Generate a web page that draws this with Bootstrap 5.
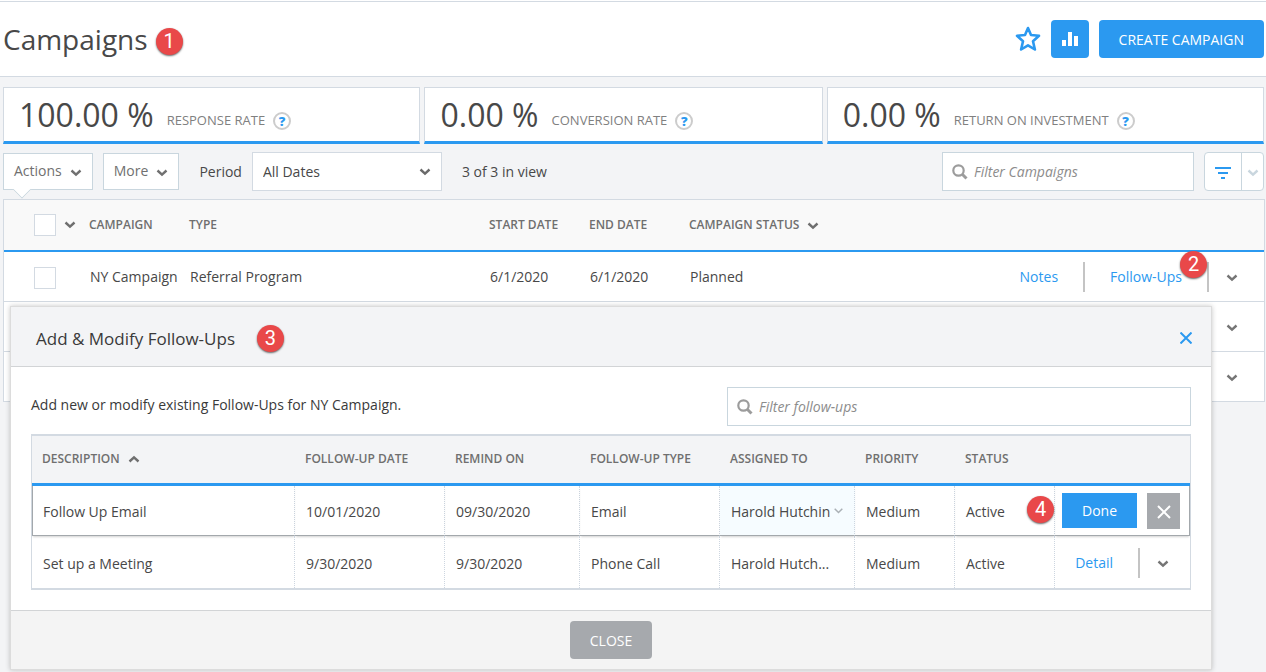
<!DOCTYPE html>
<html lang="en">
<head>
<meta charset="utf-8">
<meta name="viewport" content="width=device-width, initial-scale=1">
<title>Campaigns</title>
<link href="https://cdn.jsdelivr.net/npm/bootstrap@5.3.0/dist/css/bootstrap.min.css" rel="stylesheet">
<style>
:root { --blue: #2b99f0; --line: #d3dae2; --ink: #484848; --muted: #757575; }
body { font-family: "Open Sans", sans-serif; font-size: 14px; line-height: 20px; color: var(--ink); background: #f3f4f6; min-height: 100vh; }
a { color: var(--blue); text-decoration: none; }
.page-head { margin-top: 1px; height: 76px; border-top: 1px solid var(--line); border-bottom: 1px solid var(--line); padding: 0 2px 0 3px; }
.page-title { font-size: 28px; line-height: 38px; font-weight: 400; }
.step { display: inline-flex; align-items: center; justify-content: center; width: 27px; height: 27px; border-radius: 50%; background: #e94849; color: #fff; font: 20px/27px Roboto, sans-serif; box-shadow: 0 1px 2px rgba(0,0,0,.6); flex: none; }
.btn-main { background: var(--blue); color: #fff; border: 0; border-radius: 4px; height: 38px; font-size: 14px; line-height: 20px; padding: 2px 20px 0; }
.btn-square { width: 38px; padding: 0; }
.inner { padding: 0 2px 0 3px; }
.stat { background: #fff; border: 1px solid var(--line); border-bottom: 3px solid var(--blue); height: 57px; padding: 0 0 0 15px; }
.stat-number { font-size: 32px; line-height: 54px; padding-top: 1px; }
.stat-label { font-size: 13px; color: #808080; margin: 10px 8px 0 13px; }
.help { width: 18px; height: 18px; border: 2px solid #ccc; border-radius: 50%; background: #fff; color: var(--blue); font-size: 13px; line-height: 14px; font-weight: 800; padding: 0; margin-top: 12px; }
.tool { background: #fff; border: 1px solid #c9d6de; color: #707070; height: 37px; padding: 0 10px 2px; border-radius: 0; }
.tool svg { margin-left: 8px; position: relative; top: 1px; }
.notch { left: 12px; top: 29px; width: 14px; height: 14px; background: #fff; border: solid #c9d6de; border-width: 0 1px 1px 0; transform: rotate(45deg); clip-path: polygon(100% 0, 100% 100%, 0 100%); }
.period-box { width: 190px; }
.period-box select { appearance: none; width: 100%; height: 39px; border: 1px solid var(--line); background: #fff; padding: 0 10px; color: var(--ink); }
.over-right { right: 11px; top: 0; bottom: 0; margin: auto 0; pointer-events: none; color: #6a6a6a; }
.search { background: #fff; border: 1px solid #c9d6de; height: 39px; padding: 0 9px; }
.search input { border: 0; outline: 0; background: none; min-width: 0; padding: 0 0 0 6px; font-style: italic; }
.search input::placeholder { color: #8c8c8c; opacity: 1; }
.search-top { width: 252px; }
.search-panel { width: 464px; }
.split { height: 39px; border: 1px solid #c9d6de; border-radius: 4px; background: #fff; }
.split button { border: 0; background: none; padding: 0; width: 21px; }
.split button:first-child { width: 37px; border-right: 1px solid #c9d6de; }
.grid { table-layout: fixed; width: 100%; border-collapse: separate; border-spacing: 0; background: #fff; border: 1px solid var(--line); }
.grid th { font-size: 12px; font-weight: 600; color: #6f6f6f; white-space: nowrap; }
.grid td { white-space: nowrap; }
.grid-wrap { margin-right: -1px; }
.campaigns { border-bottom: 0; }
.campaigns th { background: #f9f9f9; height: 52px; border-bottom: 2px solid var(--blue); padding: 0 5px; }
.campaigns td { height: 50px; border-bottom: 1px solid var(--line); padding: 0 6px; }
.campaigns td:last-child { padding: 0 10px 0 0; }
.pick { appearance: none; width: 22px; height: 22px; border: 1px solid var(--line); background: #fff; margin: 0; display: block; }
.campaigns .pick-cell { padding-left: 30px; }
.campaigns td.pick-cell { padding-top: 2px; }
.icon-btn { border: 0; background: none; padding: 2px 0 0; width: 45px; height: 30px; display: flex; align-items: center; justify-content: center; color: var(--muted); }
.bar { width: 2px; height: 30px; background: #c4c4c4; margin-left: 25px; }
.bar + a { margin-left: 25px; }
.panel { top: 306px; left: 10px; right: 54px; background: #fff; border: 1px solid #dcdcdc; box-shadow: 0 0 5px rgba(0,0,0,.22); }
.panel-head { height: 60px; background: #f3f4f6; border-bottom: 1px solid #d2d4d6; padding: 4px 3px 0 25px; }
.panel-head .icon-btn { padding: 0 0 2px; }
.panel-title { font-size: 17px; line-height: 24px; font-weight: 400; color: #3a3a3a; }
.panel-body { padding: 20px; color: #3a3a3a; }
.panel-foot { height: 59px; background: #f4f4f4; border-top: 1px solid #d2d4d6; }
.btn-grey { background: #a6a9ad; color: #fff; border: 0; border-radius: 4px; height: 38px; width: 82px; padding: 2px 0 0; }
.follow { border-top-width: 2px; border-bottom-width: 2px; color: var(--ink); }
.follow th { background: #f3f4f6; height: 50px; border-bottom: 3px solid var(--blue); padding: 0 10px 2px; }
.follow td { height: 52px; padding: 3px 11px 0; border-right: 1px dotted #cdd6e0; }
.follow td:last-child { border-right: 0; padding: 2px 5px 0 0; }
.follow .editing td { height: 50px; border-bottom: 1px solid #a3a8ac; padding-top: 2px; }
.follow .editing td:first-child { border-left: 1px solid #a3a8ac; padding-left: 10px; }
.follow .editing td:last-child { border-right: 1px solid #a3a8ac; padding: 0 9px 0 7px; }
.editing td { box-shadow: 0 2px 2px -1px rgba(0,0,0,.18); }
.editing .assigned { background: #f6fcff; }
.assigned select { appearance: none; border: 0; background: none; padding: 0; width: 114px; color: var(--ink); }
.btn-done { background: var(--blue); color: #fff; border: 0; width: 75px; height: 35px; padding: 1px 0 0; }
.btn-x { background: #a6a9ad; border: 0; width: 33px; height: 36px; padding: 0; }
.step-two { right: 57px; top: -1px; }
.step-four { left: -28px; top: 10px; z-index: 1; }
</style>
</head>
<body>
<svg class="d-none" xmlns="http://www.w3.org/2000/svg">
  <symbol id="down" viewBox="0 0 12 8"><path d="M1.500 1.500 6 5.600l4.500-4.100" fill="none" stroke="currentColor" stroke-width="2.400"/></symbol>
  <symbol id="lens" viewBox="0 0 16 16"><circle cx="6.500" cy="6.500" r="5.200" fill="none" stroke="#9c9c9c" stroke-width="2.200"/><path d="m10.500 10.500 4 4" stroke="#9c9c9c" stroke-width="3"/></symbol>
</svg>
<div class="bg-white overflow-hidden">
  <header class="page-head d-flex align-items-center bg-white">
    <h1 class="page-title m-0">Campaigns</h1>
    <span class="step ms-2 mt-1">1</span>
    <div class="d-flex align-items-center ms-auto" style="gap:10px">
      <button class="border-0 bg-transparent p-0 d-flex" aria-label="Favorite"><svg width="26" height="26" viewBox="0 0 26 26"><path d="m13 2 3 7 8 .8-6 5.400 1.900 8.300L13 19.300l-6.900 4.200L8 15.200 2 9.800l8-.8z" fill="none" stroke="#2b99f0" stroke-width="2.600" stroke-linejoin="round"/></svg></button>
      <button class="btn-main btn-square d-flex align-items-center justify-content-center" aria-label="Charts"><svg width="16" height="14" fill="#fff"><path d="M0 8h4v6H0zM6 0h4v14H6zM12 4h4v10h-4z"/></svg></button>
      <button class="btn-main">CREATE CAMPAIGN</button>
    </div>
  </header>
</div>
<main class="inner">
  <section class="d-flex gap-1" style="padding-top:10px">
    <div class="stat d-flex align-items-center flex-fill"><span class="stat-number">100.00 %</span><span class="stat-label">RESPONSE RATE</span><button class="help" aria-label="About response rate">?</button></div>
    <div class="stat d-flex align-items-center flex-fill"><span class="stat-number">0.00 %</span><span class="stat-label">CONVERSION RATE</span><button class="help" aria-label="About conversion rate">?</button></div>
    <div class="stat d-flex align-items-center flex-fill"><span class="stat-number">0.00 %</span><span class="stat-label">RETURN ON INVESTMENT</span><button class="help" aria-label="About return on investment">?</button></div>
  </section>
  <section class="d-flex align-items-center py-2">
    <div class="position-relative"><button class="tool">Actions<svg width="12" height="8"><use href="#down"/></svg></button><span class="notch position-absolute"></span></div>
    <button class="tool" style="margin-left:10px">More<svg width="12" height="8"><use href="#down"/></svg></button>
    <label for="period" style="margin:0 10px 0 20px">Period</label>
    <div class="period-box position-relative"><select id="period"><option>All Dates</option></select><svg class="over-right position-absolute" width="12" height="8"><use href="#down"/></svg></div>
    <span style="margin-left:20px">3 of 3 in view</span>
    <label class="search search-top d-flex align-items-center ms-auto"><svg width="16" height="16"><use href="#lens"/></svg><input class="flex-fill" type="text" placeholder="Filter Campaigns" aria-label="Filter Campaigns"></label>
    <div class="split d-flex" style="margin-left:10px"><button aria-label="Filter"><svg width="16" height="12" fill="#2b99f0"><path d="M0 0h16v2H0zM3 5h10v2H3zM6 10h4v2H6z"/></svg></button><button aria-label="More filters" style="color:#c9d6de"><svg width="12" height="8"><use href="#down"/></svg></button></div>
  </section>
  <div class="grid-wrap">
  <table class="grid campaigns">
    <colgroup><col style="width:80px"><col style="width:100px"><col style="width:300px"><col style="width:100px"><col style="width:100px"><col style="width:300px"><col></colgroup>
    <thead><tr>
      <th class="pick-cell"><div class="d-flex align-items-center gap-2"><input class="pick" type="checkbox" aria-label="Select all"><svg width="12" height="8"><use href="#down"/></svg></div></th>
      <th>CAMPAIGN</th><th>TYPE</th><th>START DATE</th><th>END DATE</th><th>CAMPAIGN STATUS<svg class="ms-2" width="12" height="8"><use href="#down"/></svg></th><th></th>
    </tr></thead>
    <tbody>
      <tr><td class="pick-cell"><input class="pick" type="checkbox" aria-label="Select NY Campaign"></td><td>NY Campaign</td><td>Referral Program</td><td>6/1/2020</td><td>6/1/2020</td><td>Planned</td>
        <td class="position-relative"><div class="d-flex align-items-center justify-content-end"><a href="#">Notes</a><span class="bar"></span><a href="#">Follow-Ups</a><span class="bar"></span><button class="icon-btn" aria-label="Row menu"><svg width="12" height="8"><use href="#down"/></svg></button></div><span class="step step-two position-absolute">2</span></td></tr>
      <tr><td></td><td></td><td></td><td></td><td></td><td></td><td><div class="d-flex justify-content-end"><button class="icon-btn" aria-label="Row menu"><svg width="12" height="8"><use href="#down"/></svg></button></div></td></tr>
      <tr><td></td><td></td><td></td><td></td><td></td><td></td><td><div class="d-flex justify-content-end"><button class="icon-btn" aria-label="Row menu"><svg width="12" height="8"><use href="#down"/></svg></button></div></td></tr>
    </tbody>
  </table>
  </div>
</main>

<section class="panel position-absolute" role="dialog" aria-labelledby="panel-title">
  <header class="panel-head d-flex align-items-center">
    <h2 class="panel-title m-0" id="panel-title">Add &amp; Modify Follow-Ups</h2>
    <span class="step" style="margin-left:22px">3</span>
    <button class="icon-btn ms-auto" aria-label="Close"><svg width="12" height="12" stroke="#2b99f0" stroke-width="2"><path d="m.5.5 11 11m0-11-11 11"/></svg></button>
  </header>
  <div class="panel-body">
    <div class="d-flex align-items-center justify-content-between mb-2">
      <p class="mb-1">Add new or modify existing Follow-Ups for NY Campaign.</p>
      <label class="search search-panel d-flex align-items-center"><svg width="16" height="16"><use href="#lens"/></svg><input class="flex-fill" type="text" placeholder="Filter follow-ups" aria-label="Filter follow-ups"></label>
    </div>
    <table class="grid follow">
      <colgroup><col><col style="width:150px"><col style="width:135px"><col style="width:140px"><col style="width:135px"><col style="width:100px"><col style="width:100px"><col style="width:135px"></colgroup>
      <thead><tr><th>DESCRIPTION<svg class="ms-2" width="12" height="8" style="transform:rotate(180deg)"><use href="#down"/></svg></th><th>FOLLOW-UP DATE</th><th>REMIND ON</th><th>FOLLOW-UP TYPE</th><th>ASSIGNED TO</th><th>PRIORITY</th><th>STATUS</th><th></th></tr></thead>
      <tbody>
        <tr class="editing"><td>Follow Up Email</td><td>10/01/2020</td><td>09/30/2020</td><td>Email</td>
          <td class="assigned position-relative"><select aria-label="Assigned to"><option>Harold Hutchin</option></select><svg class="over-right position-absolute" width="9" height="6" viewBox="0 0 9 6"><path d="m.7.8 3.800 3.700L8.300.8" fill="none" stroke="#aab0b5" stroke-width="1.500"/></svg></td>
          <td>Medium</td><td>Active</td>
          <td class="position-relative"><span class="step step-four position-absolute">4</span><div class="d-flex justify-content-between"><button class="btn-done">Done</button><button class="btn-x" aria-label="Cancel"><svg width="14" height="14" stroke="#fff" stroke-width="2"><path d="m1 1 12 12M13 1 1 13"/></svg></button></div></td></tr>
        <tr><td>Set up a Meeting</td><td>9/30/2020</td><td>9/30/2020</td><td>Phone Call</td><td>Harold Hutch...</td><td>Medium</td><td>Active</td>
          <td><div class="d-flex align-items-center justify-content-end"><a href="#">Detail</a><span class="bar"></span><button class="icon-btn" aria-label="Row menu"><svg width="12" height="8"><use href="#down"/></svg></button></div></td></tr>
      </tbody>
    </table>
  </div>
  <footer class="panel-foot d-flex align-items-center justify-content-center"><button class="btn-grey">CLOSE</button></footer>
</section>
<script src="https://cdn.jsdelivr.net/npm/bootstrap@5.3.0/dist/js/bootstrap.bundle.min.js"></script>
</body>
</html>
